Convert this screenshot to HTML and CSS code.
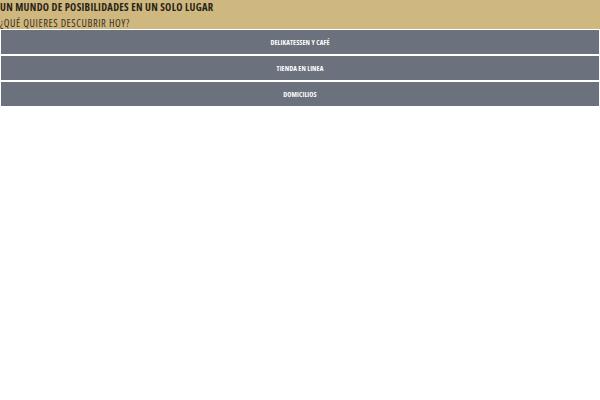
FILE: index.html
```html
<!DOCTYPE html>
<html lang="es">
<head>
<meta charset="utf-8">
<title>Un mundo de posibilidades</title>
<link rel="stylesheet" href="styles.css">
</head>
<body>
<header class="hero">
  <h1 class="hero-title">UN MUNDO DE POSIBILIDADES EN UN SOLO LUGAR</h1>
  <p class="hero-sub">¿QUÉ QUIERES DESCUBRIR HOY?</p>
</header>
<nav class="menu">
  <a class="menu-btn" href="#">DELIKATESSEN Y CAFÉ</a>
  <a class="menu-btn" href="#">TIENDA EN LINEA</a>
  <a class="menu-btn" href="#">DOMICILIOS</a>
</nav>
</body>
</html>
```
FILE: styles.css
```css
html, body {
  margin: 0;
  padding: 0;
  background: #ffffff;
}
body {
  font-family: "Open Sans", "DejaVu Sans Condensed", sans-serif;
  font-stretch: 75%;
  color: #2b2418;
}
.hero {
  background: #cfb87f;
  height: 29px;
}
.hero-title {
  margin: 0;
  padding-top: 1px;
  font-size: 10.5px;
  line-height: 12px;
  font-weight: bold;
  letter-spacing: 0.3px;
  color: #2a2418;
}
.hero-sub {
  margin: 0;
  padding-top: 4px;
  font-size: 10.5px;
  line-height: 13px;
  font-weight: normal;
  letter-spacing: 0.55px;
  color: #3a3020;
}
.menu {
  display: flex;
  flex-direction: column;
  gap: 2px;
  padding: 1px 1px 0 1px;
}
.menu-btn {
  display: flex;
  align-items: center;
  justify-content: center;
  height: 24px;
  background: #6b717d;
  color: #ffffff;
  font-size: 7px;
  font-weight: bold;
  letter-spacing: 0.1px;
  text-decoration: none;
}
```
